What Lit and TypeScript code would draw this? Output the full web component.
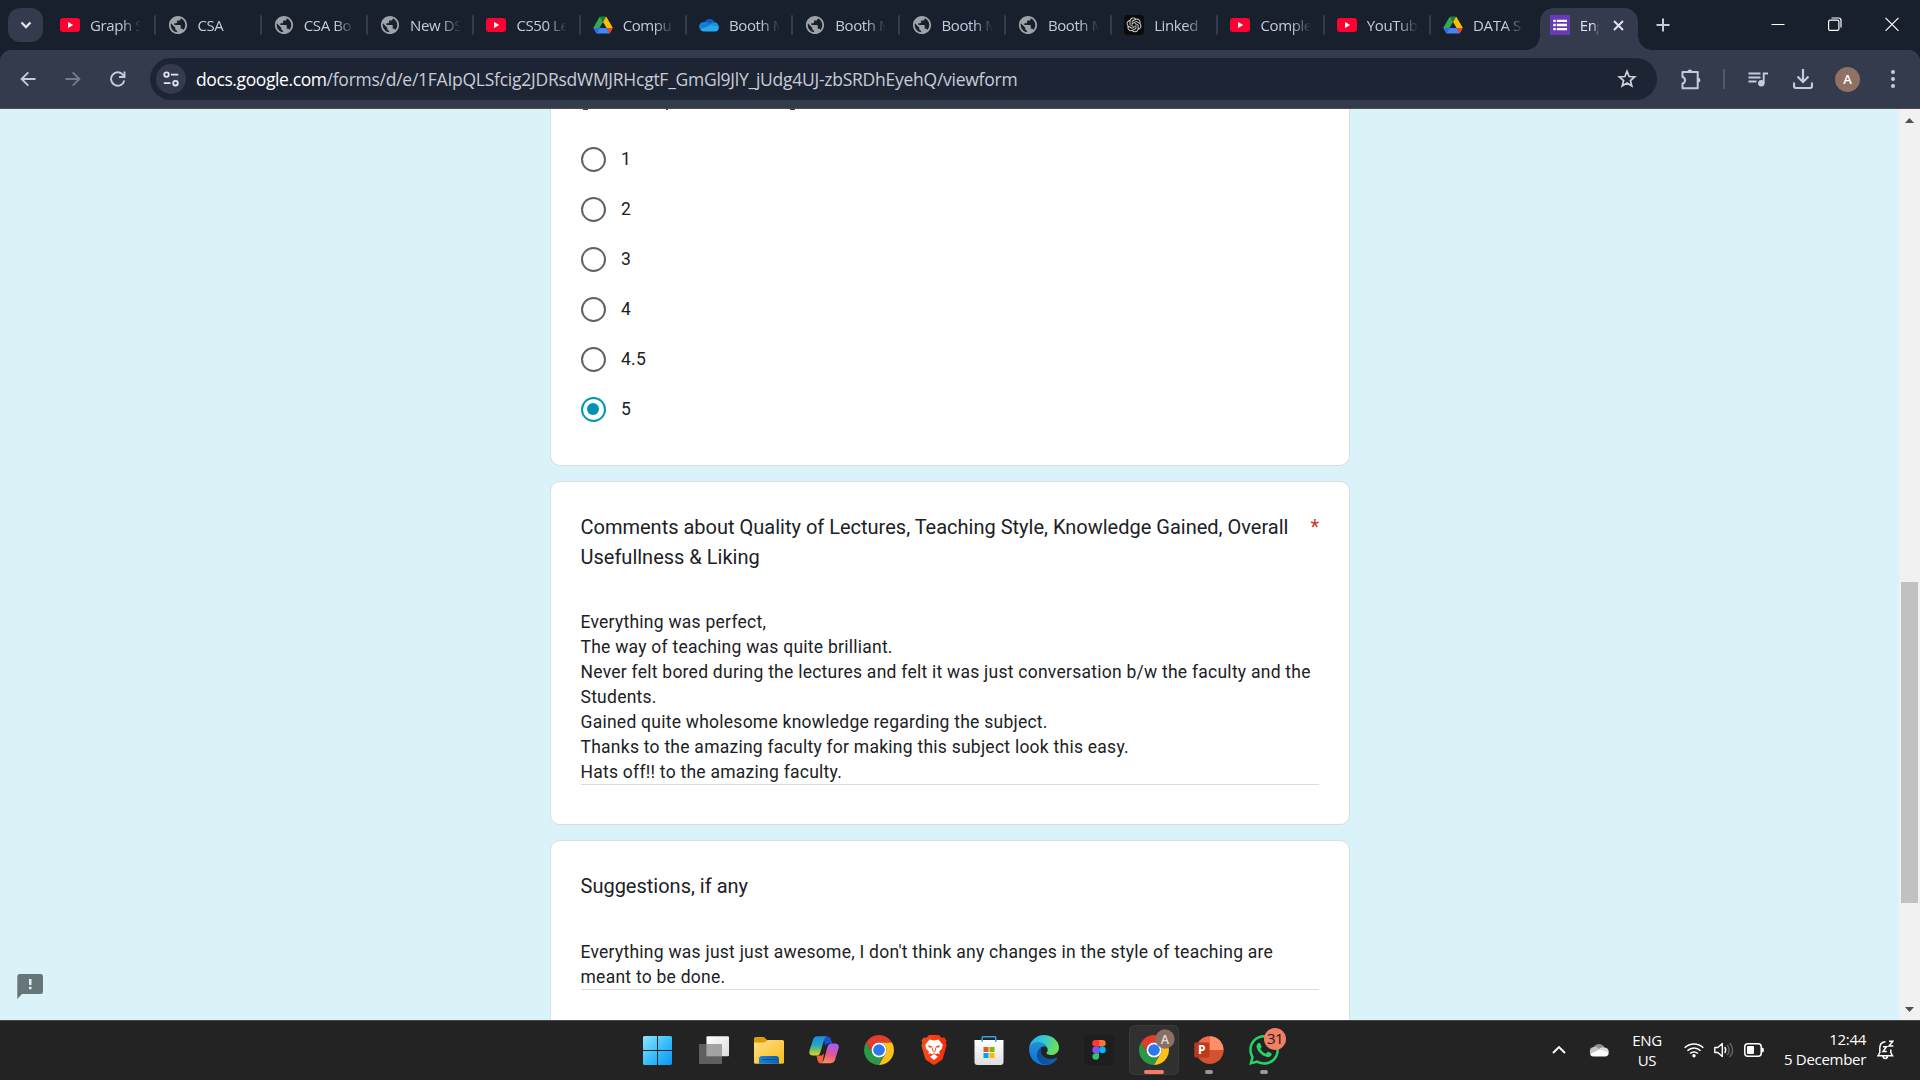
import { LitElement, html, css, svg, TemplateResult } from "lit";
import { customElement } from "lit/decorators.js";
import { classMap } from "lit/directives/class-map.js";

type Tab = { icon: string; title: string };

const TABS: Tab[] = [
  { icon: "youtube", title: "Graph S" },
  { icon: "globe", title: "CSA" },
  { icon: "globe", title: "CSA Bo" },
  { icon: "globe", title: "New DS" },
  { icon: "youtube", title: "CS50 Le" },
  { icon: "drive", title: "Compu" },
  { icon: "onedrive", title: "Booth M" },
  { icon: "globe", title: "Booth M" },
  { icon: "globe", title: "Booth M" },
  { icon: "globe", title: "Booth M" },
  { icon: "openai", title: "Linked" },
  { icon: "youtube", title: "Comple" },
  { icon: "youtube", title: "YouTub" },
  { icon: "drive", title: "DATA S" },
];

const chromeParts = svg`
  <path fill="#e33b2e" d="M24 12H44.78A24 24 0 0 0 3.22 12L13.61 30A12 12 0 0 1 24 12z"/>
  <path fill="#2a9947" d="M34.39 30L24 48A24 24 0 0 1 3.22 12L13.61 30A12 12 0 0 0 34.39 30z"/>
  <path fill="#fcc21b" d="M44.78 12A24 24 0 0 1 24 48L34.39 30A12 12 0 0 0 24 12z"/>
  <circle cx="24" cy="24" r="12" fill="#fff"/>
  <circle cx="24" cy="24" r="9.3" fill="#2f77ee"/>`;

const ICONS: Record<string, TemplateResult> = {
  youtube: html`<svg width="20" height="20" viewBox="0 0 20 20"><rect y="3" width="20" height="14" rx="3" fill="#ff0033"/><path d="M8 7l5.2 3L8 13z" fill="#fff"/></svg>`,
  globe: html`<svg width="20" height="20" viewBox="1 1 22 22"><path fill="#9fa3a9" d="M12 2C6.48 2 2 6.48 2 12s4.48 10 10 10 10-4.48 10-10S17.52 2 12 2zm-1 17.93c-3.95-.49-7-3.85-7-7.93 0-.62.08-1.21.21-1.79L9 15v1c0 1.1.9 2 2 2v1.93zm6.9-2.54c-.26-.81-1-1.39-1.9-1.39h-1v-3c0-.55-.45-1-1-1H8v-2h2c.55 0 1-.45 1-1V7h2c1.1 0 2-.9 2-2v-.41c2.93 1.19 5 4.06 5 7.41 0 2.08-.8 3.97-2.1 5.39z"/></svg>`,
  drive: html`<svg width="20" height="20" viewBox="-2 -6 91 90"><path fill="#2f6fe0" d="m6.6 66.85 3.85 6.65c.8 1.4 1.95 2.5 3.3 3.3l13.75-23.8h-27.5c0 1.55.4 3.1 1.2 4.5z"/><path fill="#34a853" d="m43.65 25-13.75-23.8c-1.35.8-2.5 1.9-3.3 3.3l-25.4 44a9.06 9.06 0 0 0-1.2 4.5h27.5z"/><path fill="#ea4335" d="m73.55 76.8c1.35-.8 2.5-1.9 3.3-3.3l1.6-2.75 7.65-13.25c.8-1.4 1.2-2.95 1.2-4.5h-27.502l5.852 11.5z"/><path fill="#188038" d="m43.65 25 13.75-23.8c-1.35-.8-2.9-1.2-4.5-1.2h-18.5c-1.6 0-3.15.45-4.5 1.2z"/><path fill="#4285f4" d="m59.8 53h-32.3l-13.75 23.8c1.35.8 2.9 1.2 4.5 1.2h50.8c1.6 0 3.15-.45 4.5-1.2z"/><path fill="#fbbc04" d="m73.4 26.5-12.7-22c-.8-1.4-1.95-2.5-3.3-3.3l-13.75 23.8 16.15 28h27.45c0-1.55-.4-3.1-1.2-4.5z"/></svg>`,
  onedrive: html`<svg width="20" height="20" viewBox="0 0 20 20"><path fill="#0a5fbd" d="M5.5 7.6A5.4 5.4 0 0 1 15.6 7.4L11 11z"/><path fill="#1280d8" d="M5.5 7a4.6 4.6 0 0 0-4.6 7.1L11.5 10A6 6 0 0 0 5.5 7z"/><path fill="#1a90e0" d="M10.5 9.8A5.6 5.6 0 0 1 15.6 7.3a4.2 4.2 0 0 1 4.1 4.4l-3 2z"/><path fill="#2aa6ec" d="M.9 14.1A4.3 4.3 0 0 0 4.6 16.5H16.2a3.8 3.8 0 0 0 3.5-4.9L11.5 9.9z"/></svg>`,
  openai: html`<svg width="20" height="20" viewBox="0 0 20 20"><rect width="20" height="20" rx="3.5" fill="#0b0b0b"/><g transform="translate(2.6 2.4) scale(.62)"><path fill="#d6d6d6" d="M22.2819 9.8211a5.9847 5.9847 0 0 0-.5157-4.9108 6.0462 6.0462 0 0 0-6.5098-2.9A6.0651 6.0651 0 0 0 4.9807 4.1818a5.9847 5.9847 0 0 0-3.9977 2.9 6.0462 6.0462 0 0 0 .7427 7.0966 5.98 5.98 0 0 0 .511 4.9107 6.051 6.051 0 0 0 6.5146 2.9001A5.9847 5.9847 0 0 0 13.2599 24a6.0557 6.0557 0 0 0 5.7718-4.2058 5.9894 5.9894 0 0 0 3.9977-2.9001 6.0557 6.0557 0 0 0-.7475-7.0729zm-9.022 12.6081a4.4755 4.4755 0 0 1-2.8764-1.0408l.1419-.0804 4.7783-2.7582a.7948.7948 0 0 0 .3927-.6813v-6.7369l2.02 1.1686a.071.071 0 0 1 .038.052v5.5826a4.504 4.504 0 0 1-4.4945 4.4944zm-9.6607-4.1254a4.4708 4.4708 0 0 1-.5346-3.0137l.142.0852 4.783 2.7582a.7712.7712 0 0 0 .7806 0l5.8428-3.3685v2.3324a.0804.0804 0 0 1-.0332.0615L9.74 19.9502a4.4992 4.4992 0 0 1-6.1408-1.6464zM2.3408 7.8956a4.485 4.485 0 0 1 2.3655-1.9728V11.6a.7664.7664 0 0 0 .3879.6765l5.8144 3.3543-2.0201 1.1685a.0757.0757 0 0 1-.071 0l-4.8303-2.7865A4.504 4.504 0 0 1 2.3408 7.872zm16.5963 3.8558L13.1038 8.364 15.1192 7.2a.0757.0757 0 0 1 .071 0l4.8303 2.7913a4.4944 4.4944 0 0 1-.6765 8.1042v-5.6772a.79.79 0 0 0-.407-.667zm2.0107-3.0231l-.142-.0852-4.7735-2.7818a.7759.7759 0 0 0-.7854 0L9.409 9.2297V6.8974a.0662.0662 0 0 1 .0284-.0615l4.8303-2.7866a4.4992 4.4992 0 0 1 6.6802 4.66zM8.3065 12.863l-2.02-1.1638a.0804.0804 0 0 1-.038-.0567V6.0742a4.4992 4.4992 0 0 1 7.3757-3.4537l-.142.0805L8.704 5.459a.7948.7948 0 0 0-.3927.6813zm1.0976-2.3654l2.602-1.4998 2.6069 1.4998v2.9994l-2.5974 1.4997-2.6067-1.4997Z"/></g></svg>`,
  forms: html`<svg width="20" height="20" viewBox="0 0 20 20"><rect width="20" height="20" rx="1" fill="#673ab7"/><path fill="#fff" d="M3.3 4.7h2.4v2.4H3.3zM3.3 8.8h2.4v2.4H3.3zM3.3 12.9h2.4v2.4H3.3zM6.8 4.7H17v2.4H6.8zM6.8 8.8H17v2.4H6.8zM6.8 12.9H17v2.4H6.8z"/></svg>`,

  windows: html`<svg width="29" height="29" viewBox="0 0 29 29"><defs><linearGradient id="w" x1="0" y1="0" x2="1" y2="1"><stop offset="0" stop-color="#8fe3fd"/><stop offset=".5" stop-color="#3cc0fa"/><stop offset="1" stop-color="#0a93f5"/></linearGradient></defs><path fill="url(#w)" d="M1 0H14V14H0V1zM15 0H28L29 1V14H15zM0 15H14V29H1L0 28zM15 15H29V28L28 29H15z"/></svg>`,
  taskview: html`<svg width="30" height="30" viewBox="0 0 30 30"><defs><linearGradient id="tv" x1="0" y1="0" x2="1" y2="1"><stop offset="0" stop-color="#fff"/><stop offset="1" stop-color="#dcdcdc"/></linearGradient></defs><rect x="7.5" y="1.3" width="22.5" height="20" rx="1" fill="url(#tv)"/><rect x="0" y="9" width="23" height="20" rx="1" fill="#6a6a6a" fill-opacity=".85"/><path d="M7.5 9H22a1 1 0 0 1 1 1V21.3H7.5z" fill="#a3a3a3"/></svg>`,
  explorer: html`<svg width="30" height="30" viewBox="0 0 30 30"><defs><linearGradient id="fe" x1="0" y1="0" x2="1" y2="1"><stop offset="0" stop-color="#ffe083"/><stop offset="1" stop-color="#f8bb1c"/></linearGradient><linearGradient id="fb" x1="0" y1="0" x2="1" y2="0"><stop offset="0" stop-color="#1684d8"/><stop offset="1" stop-color="#0c5fae"/></linearGradient></defs><path fill="#dd9b05" d="M0 3.5Q0 2 1.5 2H10l3 3v5H0z"/><path fill="url(#fe)" d="M0 7.5H10.5L13.5 5H28.5Q30 5 30 6.5V27.500Q30 28.700 28.500 28.700H1.500Q0 28.700 0 27.500z"/><path fill="url(#fb)" d="M5 28.700V24a3 3 0 0 1 3-3H22a3 3 0 0 1 3 3V28.700z"/><rect x="8.500" y="24" width="13" height="1" fill="#0a4a8c"/></svg>`,
  copilot: html`<svg width="30" height="30" viewBox="0 0 30 30"><defs><linearGradient id="c1" x1="0" y1="0" x2="0" y2="1"><stop offset="0" stop-color="#1a8fe8"/><stop offset=".45" stop-color="#23a6c4"/><stop offset=".75" stop-color="#7fc653"/><stop offset="1" stop-color="#e6cf2e"/></linearGradient><linearGradient id="c2" x1="0.2" y1="0" x2="0" y2="1"><stop offset="0" stop-color="#a45cf0"/><stop offset=".5" stop-color="#e8548f"/><stop offset="1" stop-color="#fb9a4b"/></linearGradient></defs><path fill="#1b50cf" d="M14 1.300H18.500Q21 1.300 21.800 4L23.200 8.500H19Q17 8.500 16.300 11z"/><path fill="#f0623c" d="M7.500 20.500H13L15 18.500 13.500 28.200H11.500Q9.300 28.200 8.600 25.500z"/><path fill="url(#c1)" d="M8.800 1.300H17.500Q15.800 2.300 15 5L11.200 17.800Q10.400 20.500 8 20.500H4Q-.7 20.500.5 15.500L4 4.700Q5.200 1.300 8.800 1.300z"/><path fill="url(#c2)" d="M21.300 28.200H12.500Q14.300 27.200 15 24.500L18.700 11.200Q19.500 8.500 22 8.500H26Q30.700 8.500 29.500 13.500L26.100 24.800Q25 28.200 21.300 28.200z"/></svg>`,
  chrome: html`<svg width="30" height="30" viewBox="0 0 48 48">${chromeParts}</svg>`,
  brave: html`<svg width="26" height="30" viewBox="0 0 26 30"><defs><linearGradient id="br" x1="0" x2="1"><stop offset="0" stop-color="#f2511f"/><stop offset="1" stop-color="#fb2a08"/></linearGradient></defs><path fill="url(#br)" d="M8 0H18L20.500 2.700 23.200 2.400 25.500 5.500 24.700 8 25.600 10.500 22 23Q21.500 24.500 20 25.500L14.500 29.300Q13 30.200 11.500 29.300L6 25.500Q4.500 24.500 4 23L.4 10.500 1.300 8 .5 5.500 2.800 2.400 5.500 2.700z"/><path fill="#fff" d="M13 5.500 17.500 4.600 21.700 9.700 21 13.500 18 16.800 19 19.200 16.500 18.300 14.200 19.700 17 21.800 13 24.900 9 21.800 11.800 19.700 9.500 18.300 7 19.200 8 16.800 5 13.500 4.300 9.700 8.500 4.600z"/><path fill="#f8431a" d="M7 10.300 11 11.300 10.800 12.500 8 12.400zM19 10.300 15 11.300 15.200 12.500 18 12.400z"/><path d="M11.300 12.500 11.800 16.300 13 17.200 14.200 16.300 14.700 12.500M9.500 20.400 13 18.700 16.500 20.400" fill="none" stroke="#f8431a" stroke-width=".9"/></svg>`,
  store: html`<svg width="30" height="30" viewBox="0 0 30 30"><defs><linearGradient id="st" x1="0" y1="0" x2="0" y2="1"><stop offset="0" stop-color="#fff"/><stop offset="1" stop-color="#dedede"/></linearGradient></defs><path fill="url(#st)" d="M.5 5H29.500V27Q29.500 30 26.500 30H3.500Q.5 30 .5 27z"/><path d="M8.200 7V2.500Q8.200 1.700 9 1.700H21Q21.800 1.700 21.800 2.500V7" fill="none" stroke="#28a8e8" stroke-width="1.500"/><path fill="#f25022" d="M9.500 12H14.500V17H9.500z"/><path fill="#7fba00" d="M15.500 12H20.500V17H15.500z"/><path fill="#00a4ef" d="M9.500 18H14.500V23H9.500z"/><path fill="#ffb900" d="M15.500 18H20.500V23H15.500z"/></svg>`,
  edge: html`<svg width="30" height="30" viewBox="0 0 256 257"><defs><linearGradient id="e1" x1="0" y1="0" x2="1" y2="0"><stop offset="0" stop-color="#0c4c9b"/><stop offset="1" stop-color="#1161ad"/></linearGradient><linearGradient id="e2" x1=".5" y1="0" x2=".4" y2="1"><stop offset="0" stop-color="#2294dc"/><stop offset="1" stop-color="#0d72cf"/></linearGradient><linearGradient id="e3" x1="0" y1="0" x2="1" y2=".3"><stop offset="0" stop-color="#2aa9e8"/><stop offset=".5" stop-color="#35c5d6"/><stop offset="1" stop-color="#68e05c"/></linearGradient></defs><path fill="url(#e1)" d="M235.680 195.460a93.730 93.730 0 0 1-10.540 4.710 101.870 101.870 0 0 1-35.900 6.460c-47.320 0-88.540-32.550-88.540-74.320A31.480 31.480 0 0 1 117.130 105c-42.800 1.800-53.800 46.400-53.800 72.530 0 73.880 68.090 81.370 82.760 81.370 7.910 0 19.840-2.300 27-4.560l1.310-.44a128.340 128.340 0 0 0 66.600-52.800 4 4 0 0 0-5.320-5.640z"/><path fill="url(#e2)" d="M105.730 241.420a79.200 79.200 0 0 1-22.740-21.340 80.720 80.720 0 0 1 29.530-120c3.130-1.470 8.450-4.050 15.540-4a32.350 32.350 0 0 1 25.690 13 31.880 31.880 0 0 1 6.360 18.660c0-.21 24.460-79.600-80-79.600-43.900 0-80 41.660-80 78.210a130.150 130.150 0 0 0 12.110 56 128 128 0 0 0 156.380 67.110 75.550 75.550 0 0 1-62.780-8z"/><path fill="url(#e3)" d="M152.330 148.860c-.81 1.050-3.300 2.500-3.300 5.660 0 2.610 1.700 5.120 4.720 7.230 14.380 10 41.490 8.680 41.560 8.680a59.560 59.560 0 0 0 30.270-8.350 61.380 61.380 0 0 0 30.430-52.880c.26-22.410-8-37.310-11.340-43.910C223.460 23.840 177.720 0 128 0A128 128 0 0 0 0 126.200c.48-36.540 36.800-66.050 80-66.050 3.500 0 23.460.34 42 10.070 16.340 8.580 24.900 18.940 30.850 29.210 6.180 10.670 7.280 24.150 7.280 29.520s-2.740 13.330-7.800 19.910z"/></svg>`,
  figma: html`<svg width="30" height="30" viewBox="0 0 30 30"><rect width="30" height="30" rx="3" fill="#1e1e1e"/><path fill="#ff3737" d="M15 5H11.600a3.300 3.300 0 0 0 0 6.600H15z"/><path fill="#ff7237" d="M15 5h3.400a3.300 3.300 0 0 1 0 6.600H15z"/><path fill="#874fff" d="M15 11.600H11.600a3.300 3.300 0 0 0 0 6.600H15z"/><circle cx="18.400" cy="14.900" r="3.300" fill="#00b6ff"/><path fill="#24cb71" d="M15 18.200H11.600a3.300 3.300 0 1 0 3.400 3.300z"/></svg>`,
  chromeA: html`<svg width="36" height="36" viewBox="0 0 36 36"><g transform="translate(0 6) scale(.625)">${chromeParts}</g><circle cx="26" cy="10" r="9.700" fill="#8b6f63"/><text x="26" y="14.700" text-anchor="middle" font-family="Open Sans, sans-serif" font-weight="600" font-size="12.500" fill="#e4dedb">A</text></svg>`,
  powerpoint: html`<svg width="30" height="28" viewBox="0 0 30 28"><circle cx="15.800" cy="14" r="13.700" fill="#ce4a28"/><path fill="#ff8f6b" d="M15.800.3A13.700 13.700 0 0 1 29.500 14H15.800z"/><path fill="#ed6c47" d="M15.800.3A13.700 13.700 0 0 0 2.100 14H15.800z"/><path fill="#d35230" d="M2.100 14H29.500a13.700 13.700 0 0 1-27.400 0z"/><rect x=".3" y="6.500" width="15" height="15" rx="1.500" fill="#b93a1c"/><text x="7.700" y="18.300" text-anchor="middle" font-family="Open Sans, sans-serif" font-weight="700" font-size="12" fill="#fff">P</text></svg>`,
  whatsapp: html`<svg width="40" height="40" viewBox="0 0 40 40"><g transform="translate(0 7) scale(1.250)"><path fill="#25d366" d="M17.472 14.382c-.297-.149-1.758-.867-2.030-.967-.273-.099-.471-.148-.67.15-.197.297-.767.966-.94 1.164-.173.199-.347.223-.644.075-.297-.15-1.255-.463-2.390-1.475-.883-.788-1.480-1.761-1.653-2.059-.173-.297-.018-.458.13-.606.134-.133.298-.347.446-.52.149-.174.198-.298.298-.497.099-.198.05-.371-.025-.52-.075-.149-.669-1.612-.916-2.207-.242-.579-.487-.5-.669-.51-.173-.008-.371-.01-.57-.01-.198 0-.52.074-.792.372-.272.297-1.040 1.016-1.040 2.479 0 1.462 1.065 2.875 1.213 3.074.149.198 2.096 3.200 5.077 4.487.709.306 1.262.489 1.694.625.712.227 1.360.195 1.871.118.571-.085 1.758-.719 2.006-1.413.248-.694.248-1.289.173-1.413-.074-.124-.272-.198-.57-.347m-5.421 7.403h-.004a9.870 9.870 0 01-5.031-1.378l-.361-.214-3.741.982.998-3.648-.235-.374a9.860 9.860 0 01-1.510-5.260c.001-5.450 4.436-9.884 9.888-9.884 2.640 0 5.122 1.030 6.988 2.898a9.825 9.825 0 012.893 6.994c-.003 5.450-4.437 9.884-9.885 9.884m8.413-18.297A11.815 11.815 0 0012.050 0C5.495 0 .16 5.335.157 11.892c0 2.096.547 4.142 1.588 5.945L.057 24l6.305-1.654a11.882 11.882 0 005.683 1.448h.005c6.554 0 11.890-5.335 11.893-11.893a11.821 11.821 0 00-3.480-8.413z"/></g><circle cx="26" cy="11" r="11" fill="#f27e63"/><text x="26" y="16.300" text-anchor="middle" font-family="Open Sans, sans-serif" font-size="15" letter-spacing="-.5" fill="#1a1a1a">31</text></svg>`,
};

const TASKS: { icon: string; state?: string; wide?: string }[] = [
  { icon: "windows", wide: "nudge" },
  { icon: "taskview" },
  { icon: "explorer" },
  { icon: "copilot" },
  { icon: "chrome" },
  { icon: "brave" },
  { icon: "store" },
  { icon: "edge" },
  { icon: "figma" },
  { icon: "chromeA", state: "active", wide: "badged" },
  { icon: "powerpoint", state: "open" },
  { icon: "whatsapp", state: "open", wide: "badged" },
];

@customElement("tab-strip")
class TabStrip extends LitElement {
  static styles = css`
    :host { display: flex; height: 50px; background: #18202e; color: #c3cbe0; font: 15px/20px "Open Sans", "Noto Sans", sans-serif; }
    svg { display: block; flex: none; }
    .search { width: 35px; height: 34px; margin: 8px 5px 0 8px; border-radius: 12px; background: #333b4d; display: grid; place-items: center; flex: none; }
    .tab { width: 106.300px; height: 50px; box-sizing: border-box; padding-left: 12px; display: flex; align-items: center; gap: 10px; flex: none; }
    .first { width: 107.500px; }
    .sep { width: 2px; height: 20px; background: #333b4d; border-radius: 1px; flex: none; margin-left: auto; }
    .last .sep { visibility: hidden; }
    .title { width: 51px; white-space: nowrap; letter-spacing: -0.400px; mask-image: linear-gradient(90deg, #000 62%, transparent 100%); }
    .current { width: 98.500px; height: 42px; margin: 8px 0 0 2.400px; box-sizing: border-box; padding: 0 0 8px 10px; border-radius: 14px 14px 0 0; background: #333b4d; color: #dfe3ee; display: flex; align-items: center; gap: 10px; position: relative; flex: none; }
    .current::before, .current::after { content: ""; position: absolute; bottom: 0; width: 14px; height: 14px; }
    .current::before { left: -14px; background: radial-gradient(circle at 0 0, transparent 13.500px, #333b4d 14px); }
    .current::after { right: -14px; background: radial-gradient(circle at 100% 0, transparent 13.500px, #333b4d 14px); }
    .current .title { width: 19px; mask-image: linear-gradient(90deg, #000 70%, transparent); }
    .close { margin-left: 4px; }
    .plus { margin: 18px 0 0 18px; }
    .window { margin: 17px 21.500px 0 auto; display: flex; gap: 43px; }
  `;
  render() {
    return html`
      <div class="search"><svg width="12" height="8" viewBox="0 0 12 8"><path d="M1.500 1.500 6 6 10.500 1.500" fill="none" stroke="#e3e6ee" stroke-width="2.300"/></svg></div>
      ${TABS.map((t, i) => html`<div class=${classMap({ tab: true, first: i === 0, last: i === TABS.length - 1 })}>${ICONS[t.icon]}<span class="title">${t.title}</span><span class="sep"></span></div>`)}
      <div class="current">${ICONS.forms}<span class="title">Eng</span><svg class="close" width="11" height="11" viewBox="0 0 11 11"><path d="M1 1 10 10M10 1 1 10" stroke="#dfe3ee" stroke-width="2"/></svg></div>
      <svg class="plus" width="14" height="14" viewBox="0 0 14 14"><path d="M7 .5V13.500M.5 7H13.500" stroke="#c3cbe0" stroke-width="2"/></svg>
      <div class="window">
        <svg width="14" height="14" viewBox="0 0 14 14"><path d="M.5 7.500H13.500" stroke="#fff"/></svg>
        <svg width="14" height="14" viewBox="0 0 14 14"><rect x=".6" y="3.100" width="10.300" height="10.300" rx="1.500" fill="none" stroke="#fff" stroke-width="1.200"/><path d="M3.500 1H10.500Q13 1 13 3.500V10.500" fill="none" stroke="#fff" stroke-width="1.200"/></svg>
        <svg width="14" height="14" viewBox="0 0 14 14"><path d="M.5.8 13.500 13.800M13.500.8.5 13.800" stroke="#fff" stroke-width="1.200"/></svg>
      </div>`;
  }
}

@customElement("nav-bar")
class NavBar extends LitElement {
  static styles = css`
    :host { display: block; background: #18202e; }
    .bar { height: 59px; box-sizing: border-box; border-bottom: 1px solid #4d4a52; background: #333b4d; border-radius: 11px 11px 0 0; padding: 0 5px; display: flex; align-items: center; color: #fff; font-family: "Open Sans", "Noto Sans", sans-serif; }
    svg { display: block; }
    .btn { width: 45px; height: 42px; display: grid; place-items: center; flex: none; }
    .omni { width: 1507px; height: 42px; margin: 0 12px 0 10px; box-sizing: border-box; border-radius: 21px; background: #1d2535; display: flex; align-items: center; padding: 0 20px 0 6px; flex: none; }
    .site { width: 30px; height: 30px; border-radius: 50%; background: #333b4d; display: grid; place-items: center; margin-right: 10px; }
    .url { font-size: 17.500px; line-height: 24px; white-space: nowrap; color: #c9ccd6; letter-spacing: -0.255px; }
    .host { color: #fff; letter-spacing: -0.400px; }
    .star { margin-left: auto; }
    .div { width: 21px; display: flex; padding-left: 9px; box-sizing: border-box; flex: none; }
    .line { width: 2px; height: 20px; background: #4f586c; }
    .avatar { width: 25px; height: 25px; border-radius: 50%; background: #8f7165; font-size: 13px; font-weight: 600; line-height: 25px; text-align: center; }
  `;
  render() {
    const c = "#c3cbe0";
    return html`<div class="bar">
      <div class="btn"><svg width="16" height="16" viewBox="0 0 16 16"><path d="M15.500 8H1.800M8.300 1.300 1.600 8 8.300 14.700" fill="none" stroke=${c} stroke-width="1.900"/></svg></div>
      <div class="btn"><svg width="16" height="16" viewBox="0 0 16 16"><path d="M.5 8H14.200M7.700 1.300 14.400 8 7.700 14.700" fill="none" stroke="#727a8c" stroke-width="1.900"/></svg></div>
      <div class="btn"><svg width="16" height="16" viewBox="0 0 16 16"><path d="M14.300 9.500A6.700 6.700 0 1 1 13.300 4.200L14.500 5.500M14.500.5V6H9" fill="none" stroke=${c} stroke-width="1.900"/></svg></div>
      <div class="omni">
        <div class="site"><svg width="16" height="16" viewBox="0 0 16 16" fill="none" stroke="#e3e6ee" stroke-width="1.800"><circle cx="3.500" cy="3.600" r="2.300"/><path d="M8 3.600H15.300M.8 12.200H7.500"/><circle cx="12.500" cy="12.200" r="2.300"/></svg></div>
        <div class="url"><span class="host">docs.google.com</span>/forms/d/e/1FAIpQLSfcig2JDRsdWMJRHcgtF_GmGl9JlY_jUdg4UJ-zbSRDhEyehQ/viewform</div>
        <svg class="star" width="20" height="20" viewBox="0 0 20 20"><path d="M10 2.300 12.100 7.500 17.700 7.900 13.400 11.500 14.800 17 10 14 5.200 17 6.600 11.500 2.300 7.900 7.900 7.500z" fill="none" stroke="#ced2dc" stroke-width="1.700"/></svg>
      </div>
      <div class="btn"><svg width="21" height="21" viewBox="0 0 21 21"><path d="M1.500 3H16.700V19.300H1.500V14.400Q4 14 4 11.300T1.500 8.100z" fill="none" stroke=${c} stroke-width="2" stroke-linejoin="round"/><path d="M6.500 3A2.400 2.400 0 0 1 11.300 3zM17 8.800A2.400 2.400 0 0 1 17 13.600z" fill=${c}/></svg></div>
      <div class="div"><span class="line"></span></div>
      <div class="btn"><svg width="20" height="16" viewBox="0 0 20 16"><path d="M.5 2.500H12.500M.5 6.500H12.500M.5 10.500H8.500M15.700 12V2.500H20" fill="none" stroke=${c} stroke-width="1.900"/><circle cx="13.300" cy="12.300" r="3.200" fill=${c}/></svg></div>
      <div class="btn"><svg width="20" height="20" viewBox="0 0 20 20"><path d="M10 0V12.500M4.500 7.500 10 13 15.500 7.500M1 13.500V17Q1 19 3 19H17Q19 19 19 17V13.500" fill="none" stroke=${c} stroke-width="2.200"/></svg></div>
      <div class="btn"><div class="avatar">A</div></div>
      <div class="btn"><svg width="4" height="18" viewBox="0 0 4 18" fill=${c}><circle cx="2" cy="2" r="2"/><circle cx="2" cy="9" r="2"/><circle cx="2" cy="16" r="2"/></svg></div>
    </div>`;
  }
}

@customElement("form-page")
class FormPage extends LitElement {
  static styles = css`
    :host { display: flex; height: 911px; background: #daf3f8; overflow: hidden; color: #202124; font-family: Roboto, sans-serif; position: relative; }
    .column { width: 800px; margin-left: 550px; display: flex; flex-direction: column; gap: 15px; flex: none; }
    .card { box-sizing: border-box; background: #fff; border: 1px solid #d8dee1; border-radius: 10px; padding: 30px 30px 30px 29.500px; flex: none; }
    .first { height: 357px; border-top: 0; border-radius: 0 0 10px 10px; padding-top: 0; }
    .trail { display: flex; height: 1px; }
    .trail i { height: 1px; background: #3b3c3f; }
    .t1 { width: 5px; margin-left: 2px; }
    .t2 { width: 2px; margin-left: 78px; }
    .t3 { width: 5px; margin-left: 122px; }
    .options { padding-top: 24px; }
    .opt { height: 50px; display: flex; align-items: center; gap: 15px; padding-left: .5px; font-size: 17.500px; line-height: 25px; letter-spacing: 0.250px; }
    .ring { width: 25px; height: 25px; box-sizing: border-box; border: 2.500px solid #5f6368; border-radius: 50%; display: grid; place-items: center; }
    .on .ring { border-color: #0097b2; }
    .on .ring::after { content: ""; width: 12px; height: 12px; margin-right: 1px; border-radius: 50%; background: #0092b3; }
    .head { display: flex; justify-content: space-between; font-size: 20px; line-height: 30px; }
    .star { color: #d93025; }
    .answer { box-sizing: border-box; margin-top: 38px; height: 175px; font-size: 17.500px; line-height: 25px; letter-spacing: 0.250px; white-space: pre; border-bottom: 1px solid #dadce0; }
    .second { height: 344px; }
    .third { height: 240px; }
    .third .answer { margin-top: 39px; height: 50px; }
    .bar { margin-left: auto; width: 21px; background: #f1f1f1; display: flex; flex-direction: column; align-items: center; padding: 9px 0 8px; box-sizing: border-box; }
    .bar svg { display: block; }
    .thumb { width: 17px; height: 321px; background: #c1c1c1; margin: 459px 0 auto; }
    .report { position: absolute; left: 17px; top: 865px; }
  `;
  render() {
    const opts = ["1", "2", "3", "4", "4.5", "5"];
    return html`
      <div class="column">
        <div class="card first">
          <div class="trail"><i class="t1"></i><i class="t2"></i><i class="t3"></i></div>
          <div class="options">
            ${opts.map((o) => html`<div class=${classMap({ opt: true, on: o === "5" })}><span class="ring"></span><span>${o}</span></div>`)}
          </div>
        </div>
        <div class="card second">
          <div class="head"><span>Comments about Quality of Lectures, Teaching Style, Knowledge Gained, Overall<br />Usefullness &amp; Liking</span><span class="star">*</span></div>
          <div class="answer">${"Everything was perfect,\nThe way of teaching was quite brilliant.\nNever felt bored during the lectures and felt it was just conversation b/w the faculty and the\nStudents.\nGained quite wholesome knowledge regarding the subject.\nThanks to the amazing faculty for making this subject look this easy.\nHats off!! to the amazing faculty."}</div>
        </div>
        <div class="card third">
          <div class="head"><span>Suggestions, if any</span></div>
          <div class="answer">${"Everything was just just awesome, I don't think any changes in the style of teaching are\nmeant to be done."}</div>
        </div>
      </div>
      <div class="bar">
        <svg width="9" height="5" viewBox="0 0 9 5"><path d="M0 5 4.500 0 9 5z" fill="#505050"/></svg>
        <div class="thumb"></div>
        <svg width="9" height="5" viewBox="0 0 9 5"><path d="M0 0 4.500 5 9 0z" fill="#505050"/></svg>
      </div>
      <svg class="report" width="26" height="25" viewBox="0 0 26 25"><path fill="#667576" fill-rule="evenodd" d="M2.500 0H23.500Q26 0 26 2.500V17.500Q26 20 23.500 20H5L.3 25V2.500Q.3 0 2.500 0zM12 5V11H14.500V5zM12 12.800V15.200H14.500V12.800z"/></svg>`;
  }
}

@customElement("task-bar")
class TaskBar extends LitElement {
  static styles = css`
    :host { display: flex; height: 60px; box-sizing: border-box; border-top: 1px solid #484848; background: #232323; color: #fff; font: 15px/20px "Open Sans", "Noto Sans", sans-serif; }
    svg { display: block; flex: none; }
    .apps { margin-left: 634px; display: flex; padding-top: 4px; flex: none; }
    .app { width: 50px; height: 50px; margin-right: 5px; border-radius: 6px; display: flex; flex-direction: column; box-sizing: border-box; align-items: center; justify-content: center; position: relative; }
    .nudge svg { margin-right: 3px; }
    .badged { justify-content: flex-start; }
    .badged svg { margin-left: 6px; margin-top: 4px; }
    .open.badged svg { margin-left: 10px; margin-top: 3px; }
    .active { background: #303030; box-shadow: inset 0 0 0 1px #393939; }
    .active::after, .open::after { content: ""; position: absolute; bottom: 1px; height: 4px; border-radius: 2px; }
    .active::after { width: 20px; background: #f27e63; }
    .open::after { width: 8px; background: #999; }
    .tray { margin-left: auto; padding: 0 26px 2px 0; display: flex; align-items: center; flex: none; }
    .lang { width: 40px; text-align: center; margin: 0 17px 0 18px; letter-spacing: -0.300px; }
    .clock { width: 102px; text-align: right; letter-spacing: -0.300px; margin-right: 11px; margin-top: -1px; }
    .cloud { margin-left: 23px; }
    .wifi { margin-right: 10px; }
    .vol { margin-right: 10px; }
  `;
  render() {
    return html`
      <div class="apps">
        ${TASKS.map((t) => html`<div class=${classMap({ app: true, active: t.state === "active", open: t.state === "open", nudge: t.wide === "nudge", badged: t.wide === "badged" })}>${ICONS[t.icon]}</div>`)}
      </div>
      <div class="tray">
        <svg width="14" height="9" viewBox="0 0 14 9"><path d="M1 8 7 2 13 8" fill="none" stroke="#fff" stroke-width="1.900"/></svg>
        <svg class="cloud" width="20" height="14" viewBox="0 0 20 14"><path fill="#8f8f8f" d="M4.500 4.500A6 6 0 0 1 15.500 4.500L10 8z"/><path fill="#c4c4c4" d="M4.500 4Q9 3 10.500 7.500L3 12A4.300 4.300 0 0 1 4.500 4z"/><path fill="#dcdcdc" d="M9 7Q11 4 14.500 4.200 19.500 4.500 19.900 9L16 11z"/><path fill="#fff" d="M1 11 10.500 6.500 19.800 9.500Q19.500 13.500 16 13.500H4Q2 13.500 1 11z"/></svg>
        <div class="lang">ENG<br />US</div>
        <svg class="wifi" width="20" height="16" viewBox="0 0 20 16" fill="none" stroke="#fff" stroke-width="1.500"><path d="M.7 5.800A13 13 0 0 1 19.300 5.800M3.400 8.700A9.300 9.300 0 0 1 16.600 8.700M6.100 11.500A5.500 5.500 0 0 1 13.900 11.500"/><circle cx="10" cy="13.700" r="1.700" fill="#fff" stroke="none"/></svg>
        <svg class="vol" width="20" height="16" viewBox="0 0 20 16" fill="none" stroke-width="1.400"><path d="M.8 5.500H3.800L8.300 1.500V14.500L3.800 10.500H.8z" stroke="#fff" stroke-linejoin="round"/><path d="M10.700 5Q12.800 8 10.700 11" stroke="#fff"/><path d="M13.300 3Q17 8 13.300 13M15.800 1Q21.500 8 15.800 15" stroke="#666"/></svg>
        <svg width="20" height="14" viewBox="0 0 20 14"><rect x=".8" y=".8" width="16.400" height="12.400" rx="3" fill="none" stroke="#fff" stroke-width="1.500"/><rect x="3" y="3" width="7" height="8" rx="1" fill="#fff"/><path d="M18 4.500Q20 4.500 20 7T18 9.500z" fill="#fff"/></svg>
        <div class="clock">12:44<br />5 December</div>
        <svg width="17" height="20" viewBox="0 0 17 20" fill="none" stroke="#fff" stroke-width="1.500"><path d="M8.500 1.800Q3 2 2.800 8V12.500L1 15.700H15.500L13.800 12.500V9.500M6 16Q6.200 18.500 8.300 18.500T10.500 16"/><path d="M6 6.800H9.500L6 11.500H9.800M12 1.200H15.800L12 6H16.300"/></svg>
      </div>`;
  }
}

@customElement("app-root")
class AppRoot extends LitElement {
  static styles = css`
    :host { display: flex; flex-direction: column; width: 1920px; height: 1080px; overflow: hidden; }
  `;
  render() {
    return html`<tab-strip></tab-strip><nav-bar></nav-bar><form-page></form-page><task-bar></task-bar>`;
  }
}
